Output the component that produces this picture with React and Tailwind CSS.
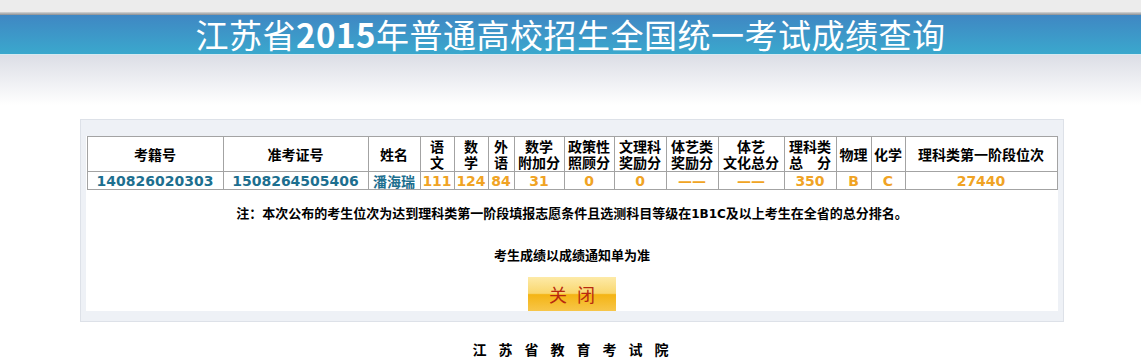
import React from "react";

const cjk = { fontFamily: '"Noto Sans CJK SC", "Noto Sans", sans-serif' };
const num = { fontFamily: '"DejaVu Sans", "Noto Sans CJK SC", sans-serif' };

const headers = [
  { w: "w-[136px]", t: ["考籍号"] },
  { w: "w-[145px]", t: ["准考证号"] },
  { w: "w-[52px]", t: ["姓名"] },
  { w: "w-[34px]", t: ["语", "文"] },
  { w: "w-[34px]", t: ["数", "学"] },
  { w: "w-[26px]", t: ["外", "语"] },
  { w: "w-[50px]", t: ["数学", "附加分"] },
  { w: "w-[50px]", t: ["政策性", "照顾分"] },
  { w: "w-[52px]", t: ["文理科", "奖励分"] },
  { w: "w-[52px]", t: ["体艺类", "奖励分"] },
  { w: "w-[66px]", t: ["体艺", "文化总分"] },
  { w: "w-[52px]", t: ["理科类", "总\u3000分"] },
  { w: "w-[35px]", t: ["物理"] },
  { w: "w-[34px]", t: ["化学"] },
  { w: "", t: ["理科类第一阶段位次"] },
];

const row = [
  { v: "140826020303", c: "text-[#1d6f8f]" },
  { v: "1508264505406", c: "text-[#1d6f8f]" },
  { v: "潘海瑞", c: "text-[#1d6f8f]" },
  { v: "111", c: "text-[#f0a324]" },
  { v: "124", c: "text-[#f0a324]" },
  { v: "84", c: "text-[#f0a324]" },
  { v: "31", c: "text-[#f0a324]" },
  { v: "0", c: "text-[#f0a324]" },
  { v: "0", c: "text-[#f0a324]" },
  { v: "——", c: "text-[#f0a324]" },
  { v: "——", c: "text-[#f0a324]" },
  { v: "350", c: "text-[#f0a324]" },
  { v: "B", c: "text-[#f0a324]" },
  { v: "C", c: "text-[#f0a324]" },
  { v: "27440", c: "text-[#f0a324]" },
];

export default function App() {
  return (
    <div className="w-[1141px] h-[358px] bg-white overflow-hidden" style={cjk}>
      {/* 顶部标题 */}
      <div className="h-[12px] bg-[#ececec]" />
      <div className="h-[3px] bg-gradient-to-b from-[#d6d6d6] to-[#8a8f94]" />
      <div className="h-[39px] bg-gradient-to-b from-[#3f87c3] to-[#3aa8cd] flex items-center justify-center">
        <h1 className="text-white text-[33px] leading-none tracking-[0.5px]" style={cjk}>
          江苏省<span className="font-bold">2015</span>年普通高校招生全国统一考试成绩查询
        </h1>
      </div>
      <div className="h-[1px] bg-[#d5e9f0]" />
      <div className="h-[50px] bg-gradient-to-b from-[#dcdee6] to-white" />

      {/* 成绩面板 */}
      <div className="ml-[80px] mt-[14px] w-[984px] border border-[#dde1e8] bg-[#eef1f6] px-[5px] pt-[16px] pb-[10px]">
        <div className="bg-white h-[175px] flex flex-col items-center">
          <table className="w-[971px] border-collapse border border-[#a3a3a3] text-[14px] font-bold text-black">
            <thead>
              <tr className="h-[35px]">
                {headers.map((h, i) => (
                  <th key={i} className={`${h.w} border border-[#a3a3a3] p-0 leading-[16px] font-bold text-center`}>
                    {h.t.map((l, j) => (
                      <div key={j}>{l}</div>
                    ))}
                  </th>
                ))}
              </tr>
            </thead>
            <tbody>
              <tr className="h-[18px]">
                {row.map((r, i) => (
                  <td key={i} className={`${r.c} border border-[#a3a3a3] p-0 leading-[16px] text-center`} style={i === 2 ? cjk : num}>
                    {r.v}
                  </td>
                ))}
              </tr>
            </tbody>
          </table>
          <p className="mt-[15px] text-[13px] font-bold text-black leading-[16px]">
            注：本次公布的考生位次为达到理科类第一阶段填报志愿条件且选测科目等级在<span style={num} className="text-[12px]">1B1C</span>及以上考生在全省的总分排名。
          </p>
          <p className="mt-[25px] text-[13px] font-bold text-black leading-[16px]">考生成绩以成绩通知单为准</p>
          <button className="mt-[14px] w-[88px] h-[36px] bg-[linear-gradient(#fdeaa8,#f9d76e_48%,#f4b414_52%,#f7c64a)] text-[#b8290f] text-[18px] tracking-[10px] pl-[10px] leading-none">
            关闭
          </button>
        </div>
      </div>

      {/* 页脚 */}
      <div className="mt-[19px] text-center text-[14px] font-bold tracking-[12px] pl-[12px] leading-[16px] text-black">
        江苏省教育考试院
      </div>
    </div>
  );
}
